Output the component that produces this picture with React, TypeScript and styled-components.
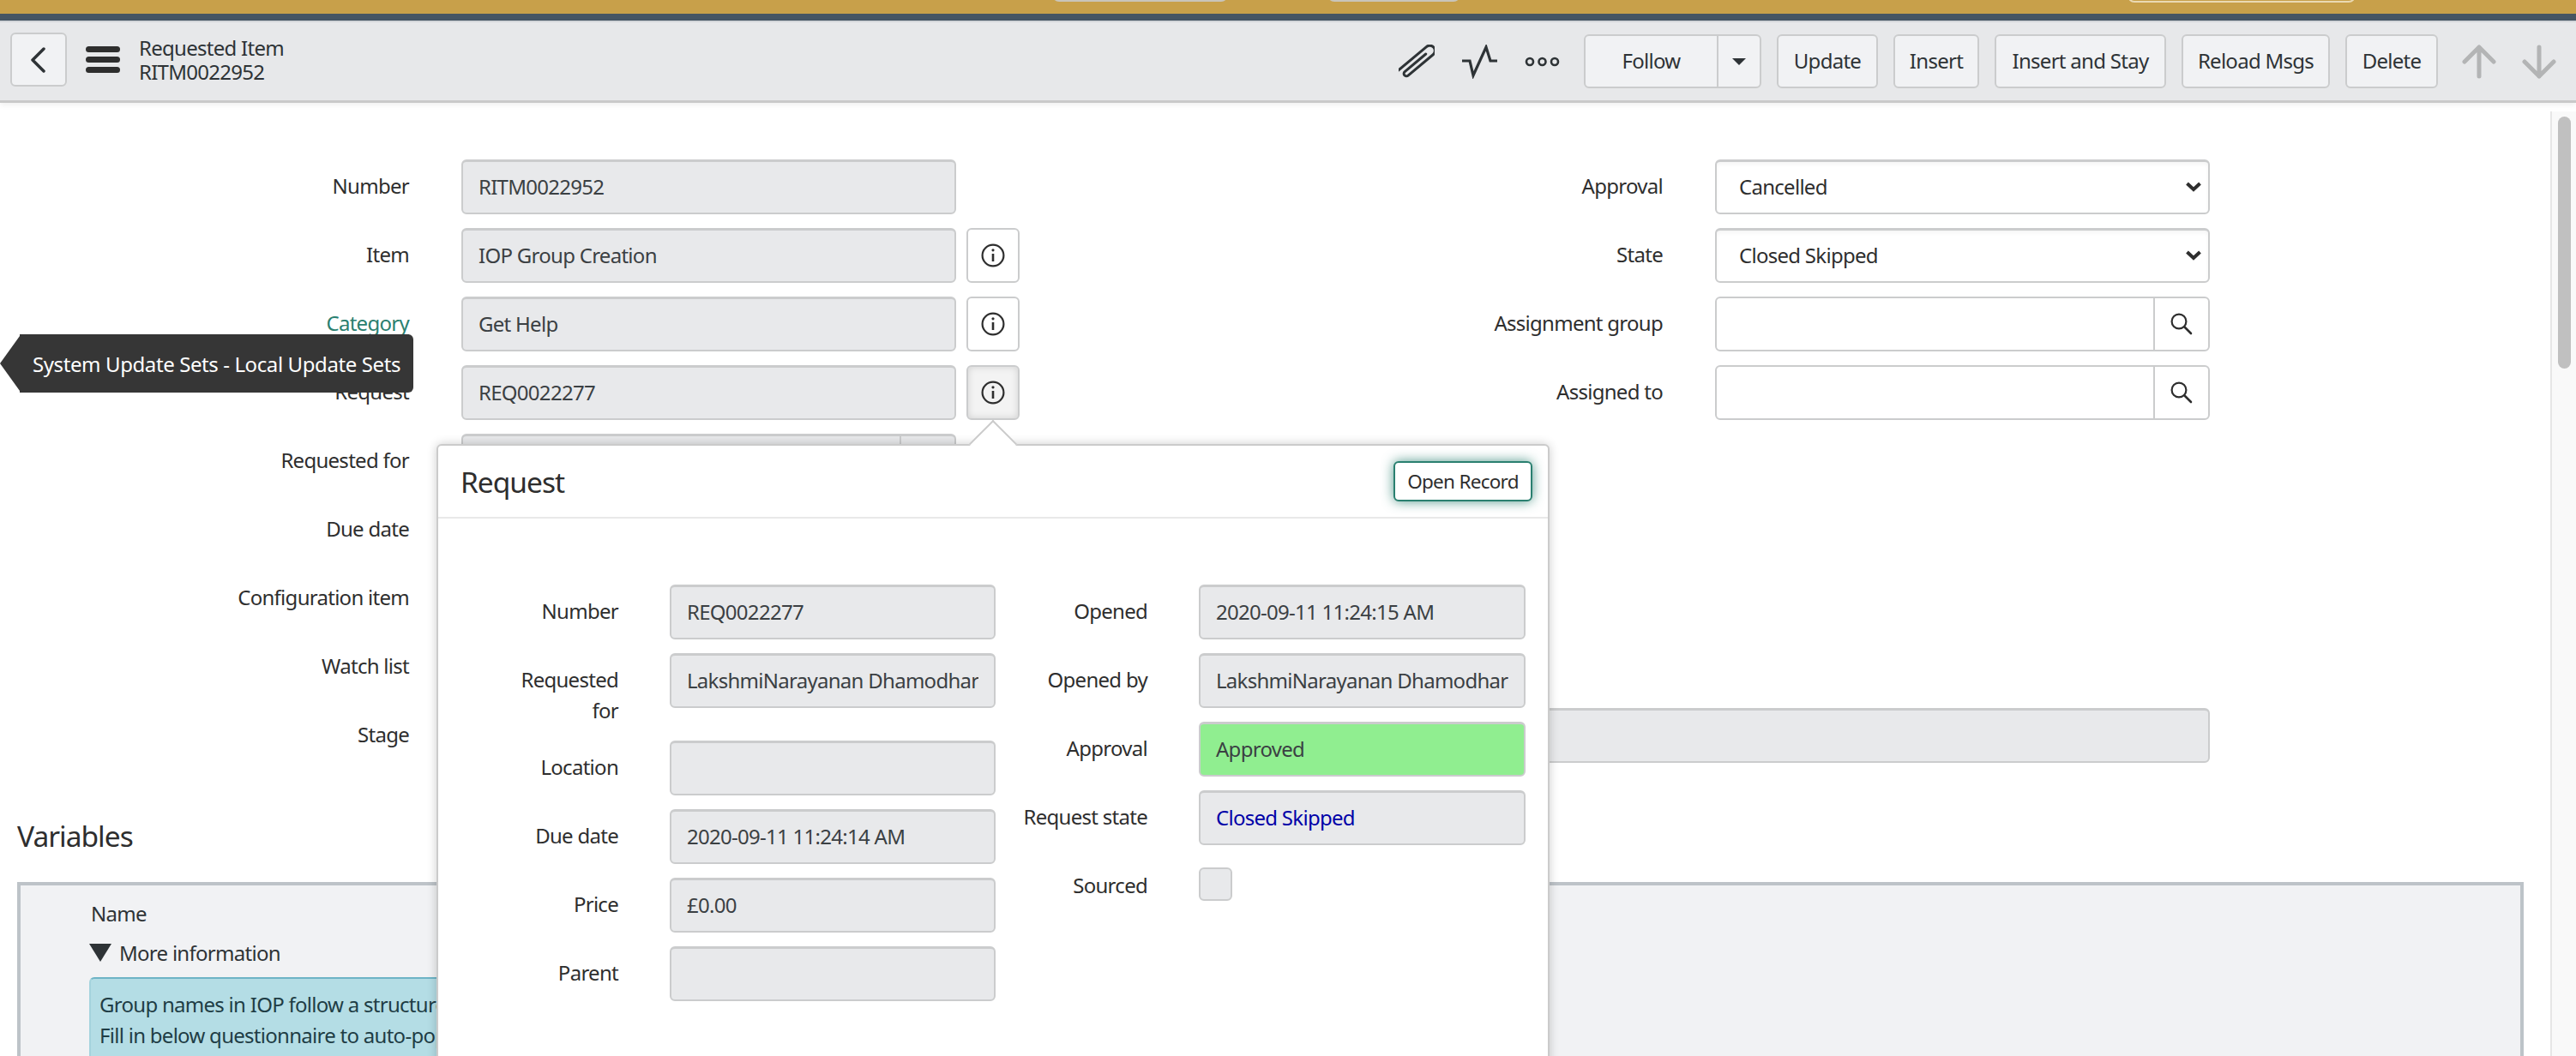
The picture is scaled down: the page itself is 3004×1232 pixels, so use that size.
import React from 'react'
import styled, { createGlobalStyle } from 'styled-components'

const GlobalStyle = createGlobalStyle`
  html, body {
    margin: 0;
    padding: 0;
    background: #fff;
  }
  body {
    font-family: 'Noto Sans', 'Open Sans', sans-serif;
    font-size: 24px;
    letter-spacing: -0.72px;
    color: #2e2e2e;
  }
  * {
    box-sizing: border-box;
  }
`

const Page = styled.div`
  position: relative;
  width: 3004px;
  height: 1232px;
  overflow: hidden;
  display: flex;
  flex-direction: column;
`

const Banner = styled.div`
  position: relative;
  height: 16px;
  flex: none;
  background: #c8a04a;
  display: flex;
  align-items: flex-start;
`

const BannerTab = styled.span<{ $left: number; $width: number; $outline?: boolean }>`
  position: absolute;
  left: ${(p) => p.$left}px;
  width: ${(p) => p.$width}px;
  top: -8px;
  height: ${(p) => (p.$outline ? 11 : 10)}px;
  border-radius: 0 0 8px 8px;
  background: ${(p) => (p.$outline ? 'transparent' : '#c9c5ba')};
  border: ${(p) => (p.$outline ? '2px solid #ead9b2' : 'none')};
`

const NavStrip = styled.div`
  height: 8px;
  flex: none;
  background: #465563;
`

const Toolbar = styled.header`
  position: relative;
  z-index: 1;
  flex: none;
  height: 96px;
  display: flex;
  align-items: center;
  padding: 0 23px 0 12px;
  background: #e7e8ea;
  border-top: 2px solid #d3d6d9;
  border-bottom: 3px solid #c9c9c9;
  box-shadow: 0 3px 6px rgba(0, 0, 0, 0.06);
`

const BackButton = styled.button`
  width: 66px;
  height: 63px;
  margin-bottom: 4px;
  padding: 0;
  display: flex;
  align-items: center;
  justify-content: center;
  background: #f1f2f4;
  border: 2px solid #cbcccd;
  border-radius: 6px;
  color: #2e3336;
`

const MenuIcon = styled.svg`
  margin-left: 22px;
  margin-bottom: 4px;
  flex: none;
`

const RecordTitle = styled.div`
  margin-left: 22px;
  margin-bottom: 4px;
  line-height: 28px;
  color: #2e3336;
`

const ToolbarActions = styled.div`
  margin-left: auto;
  display: flex;
  align-items: center;
  gap: 18px;
`

const IconGroup = styled.div`
  display: flex;
  align-items: center;
  gap: 32px;
  margin-right: 9px;
  color: #2e3336;
`

const ActionButton = styled.button<{ $width: number }>`
  width: ${(p) => p.$width}px;
  height: 63px;
  padding: 0 0 3px;
  font: inherit;
  letter-spacing: inherit;
  color: #2e3336;
  background: #f1f2f4;
  border: 2px solid #cbcccd;
  border-radius: 6px;
`

const SplitButton = styled.div`
  width: 207px;
  height: 63px;
  display: flex;
  background: #f1f2f4;
  border: 2px solid #cbcccd;
  border-radius: 6px;
  color: #2e3336;
`

const SplitLabel = styled.span`
  flex: 1;
  display: flex;
  align-items: center;
  justify-content: center;
  padding-bottom: 3px;
`

const SplitCaret = styled.span`
  width: 50px;
  display: flex;
  align-items: center;
  justify-content: center;
  border-left: 2px solid #cbcccd;
`

const ArrowGroup = styled.div`
  display: flex;
  gap: 30px;
  margin-left: 10px;
  color: #b3b4b5;
`

const Body = styled.div`
  flex: 1;
  min-height: 0;
  display: flex;
`

const Main = styled.main`
  flex: 1;
  min-width: 0;
  padding-top: 66px;
  overflow: hidden;
`

const Scrollbar = styled.div`
  flex: none;
  width: 30px;
  margin-top: 10px;
  padding: 6px 6px 0 7px;
  background: #f9f9f9;
  border-left: 2px solid #e6e6e6;
`

const ScrollThumb = styled.div`
  height: 294px;
  border-radius: 8px;
  background: #c0c0c0;
`

const FormColumns = styled.div`
  display: grid;
  grid-template-columns: 1500px 1077px;
`

const FormRow = styled.div<{ $labelWidth: number }>`
  display: grid;
  grid-template-columns: ${(p) => p.$labelWidth}px 1fr;
  column-gap: 61px;
  min-height: 64px;
  margin-bottom: 16px;
`

const Label = styled.div`
  padding-top: 13px;
  line-height: 36px;
  text-align: right;
  color: #2e2e2e;
`

const LinkLabel = styled.a`
  color: #2a8070;
  text-decoration: underline;
  text-underline-offset: 4px;
`

const ControlRow = styled.div<{ $width?: number }>`
  display: flex;
  gap: 12px;
  width: ${(p) => (p.$width ? `${p.$width}px` : 'auto')};
`

const Field = styled.div<{ $width?: number; $bg?: string; $color?: string }>`
  flex: none;
  width: ${(p) => (p.$width ? `${p.$width}px` : '100%')};
  height: 64px;
  display: flex;
  align-items: center;
  padding: 0 18px 2px;
  background: ${(p) => p.$bg || '#e8e9eb'};
  color: ${(p) => p.$color || '#3b4043'};
  border: 2px solid #cbcccd;
  border-top-width: 3px;
  border-radius: 6px;
`

const ClippedText = styled.span`
  display: block;
  width: 100%;
  overflow: hidden;
  white-space: nowrap;
`

const InfoButton = styled.button<{ $pressed?: boolean }>`
  flex: none;
  width: 62px;
  height: 64px;
  padding: 0;
  display: flex;
  align-items: center;
  justify-content: center;
  background: ${(p) => (p.$pressed ? '#f3f3f3' : '#fff')};
  border: 2px solid #cbcccd;
  border-radius: 6px;
  color: #2e2e2e;
  box-shadow: ${(p) => (p.$pressed ? 'inset 0 0 8px rgba(0, 0, 0, 0.14)' : 'none')};
`

const SelectBox = styled.div`
  width: 577px;
  height: 64px;
  display: flex;
  align-items: center;
  justify-content: space-between;
  padding: 0 8px 2px 26px;
  background: #fff;
  color: #2e2e2e;
  border: 2px solid #cbcccd;
  border-top-width: 3px;
  border-radius: 6px;
  box-shadow: inset 0 3px 4px rgba(0, 0, 0, 0.04);
`

const LookupBox = styled.div`
  width: 577px;
  height: 64px;
  display: flex;
  background: #fff;
  border: 2px solid #cbcccd;
  border-radius: 6px;
`

const LookupSpacer = styled.span`
  flex: 1;
`

const LookupButton = styled.span`
  width: 64px;
  display: flex;
  align-items: center;
  justify-content: center;
  border-left: 2px solid #cbcccd;
  color: #2e2e2e;
`

const ReadonlyLookup = styled(Field)`
  padding: 0;
  justify-content: flex-end;
`

const ReadonlyLookupButton = styled.span`
  width: 64px;
  height: 100%;
  border-left: 2px solid #cbcccd;
`

const SectionHeading = styled.h2`
  margin: 65px 0 0 20px;
  height: 40px;
  font-size: 33.5px;
  line-height: 40px;
  font-weight: 400;
  letter-spacing: -1px;
  color: #2e2e2e;
`

const VariablesPanel = styled.section`
  margin: 34px 0 0 20px;
  width: 2923px;
  height: 220px;
  padding: 18px 0 0 80px;
  background: #f1f2f4;
  border: 4px solid #bdc3c8;
  border-bottom: none;
`

const VariableHead = styled.div`
  padding-left: 2px;
  line-height: 30px;
  color: #2e3336;
`

const Disclosure = styled.div`
  margin-top: 15px;
  height: 30px;
  display: flex;
  align-items: center;
  gap: 9px;
  color: #2e3336;
`

const InfoBox = styled.div`
  margin-top: 14px;
  width: 1100px;
  height: 140px;
  padding: 12px 10px;
  background: #b4dde5;
  border-top: 2px solid #6eb4c6;
  border-left: 2px solid #a4d3dd;
  border-radius: 6px 6px 0 0;
  color: #1f3d45;
  line-height: 36px;
`

const Tooltip = styled.div`
  position: absolute;
  z-index: 3;
  left: 23px;
  top: 390px;
  height: 68px;
  width: 459px;
  display: flex;
  align-items: center;
  padding-left: 15px;
  background: #363636;
  border-radius: 0 6px 6px 0;
  color: #fff;
  letter-spacing: -0.4px;
  white-space: nowrap;

  &::before {
    content: '';
    position: absolute;
    left: -23px;
    top: 2px;
    border-style: solid;
    border-width: 32px 23px 32px 0;
    border-color: transparent #363636 transparent transparent;
  }
`

const Popover = styled.div`
  position: absolute;
  z-index: 2;
  left: 509px;
  top: 518px;
  width: 1298px;
  height: 760px;
  background: #fff;
  border: 2px solid #cbcbcb;
  border-radius: 6px;
  box-shadow: 0 0 12px rgba(0, 0, 0, 0.2);
`

const PopoverArrow = styled.span`
  position: absolute;
  left: 627px;
  top: -22px;
  width: 40px;
  height: 40px;
  background: #fff;
  border-top: 2px solid #cbcbcb;
  border-left: 2px solid #cbcbcb;
  transform: rotate(45deg);
`

const PopoverHeader = styled.div`
  position: relative;
  height: 85px;
  display: flex;
  align-items: center;
  justify-content: space-between;
  padding: 0 18px 0 26px;
  border-bottom: 2px solid #e9e9e9;
`

const PopoverTitle = styled.h3`
  margin: 0;
  font-size: 33.5px;
  font-weight: 400;
  letter-spacing: -1px;
  color: #2e2e2e;
`

const OpenRecordButton = styled.button`
  width: 162px;
  height: 47px;
  margin-top: -1px;
  padding: 0;
  font: inherit;
  font-size: 22.5px;
  letter-spacing: inherit;
  color: #2e2e2e;
  background: #fff;
  border: 2px solid #2a8070;
  border-radius: 6px;
  box-shadow: 0 0 14px rgba(42, 128, 112, 0.8);
`

const PopoverBody = styled.div`
  display: grid;
  grid-template-columns: 650px 618px;
  padding-top: 77px;
`

const PopoverLabel = styled(Label)`
  justify-self: end;
  max-width: 130px;
  padding-bottom: 1px;
`

const PopoverWideLabel = styled(Label)`
  white-space: nowrap;
`

const PopoverRow = styled.div<{ $labelWidth: number }>`
  display: grid;
  grid-template-columns: ${(p) => p.$labelWidth}px 1fr;
  column-gap: 60px;
  min-height: 64px;
  margin-bottom: 16px;
`

const Checkbox = styled.div`
  width: 39px;
  height: 39px;
  margin-top: 10px;
  background: #e8e9eb;
  border: 2px solid #cbcccd;
  border-radius: 6px;
`

const ClosedSkipped = 'Closed Skipped'
const NarayananName = 'LakshmiNarayanan Dhamodhar'

function ChevronLeft() {
  return (
    <svg width="18" height="30" viewBox="0 0 18 30" fill="none" stroke="currentColor" strokeWidth="3.5" strokeLinecap="round" strokeLinejoin="round">
      <polyline points="15,2 2,15 15,28" />
    </svg>
  )
}

function Paperclip() {
  return (
    <svg width="42" height="40" viewBox="0 0 42 40" fill="none" stroke="currentColor" strokeWidth="3" strokeLinecap="round">
      <g transform="translate(21 20) rotate(-40)">
        <path d="M-27 -6 H20 A6 6 0 0 1 20 6 H-18 A3 3 0 0 1 -18 0 H14" />
      </g>
    </svg>
  )
}

function Pulse() {
  return (
    <svg width="41" height="40" viewBox="0 0 41 40" fill="none" stroke="currentColor" strokeWidth="3.2">
      <polyline points="0,19 9,19 13,36 28,3 33,19 41,19" />
    </svg>
  )
}

function Dots() {
  return (
    <svg width="42" height="14" viewBox="0 0 42 14" fill="none" stroke="currentColor" strokeWidth="2.6">
      <circle cx="6" cy="7" r="4" />
      <circle cx="20.5" cy="7" r="4" />
      <circle cx="35" cy="7" r="4" />
    </svg>
  )
}

function Caret() {
  return (
    <svg width="16" height="8" viewBox="0 0 16 8" fill="currentColor">
      <polygon points="0,0 16,0 8,8" />
    </svg>
  )
}

function VerticalArrow({ down }: { down?: boolean }) {
  return (
    <svg width="40" height="40" viewBox="0 0 40 40" fill="none" stroke="currentColor" strokeWidth="5" strokeLinecap="round" strokeLinejoin="round">
      <g transform={down ? 'rotate(180 20 20)' : undefined}>
        <path d="M20 37 V3 M3 20 L20 3 L37 20" />
      </g>
    </svg>
  )
}

function InfoGlyph() {
  return (
    <svg width="28" height="28" viewBox="0 0 28 28" fill="none" stroke="currentColor" strokeWidth="2.2">
      <circle cx="14" cy="14" r="12.4" />
      <line x1="14" y1="12" x2="14" y2="21" strokeWidth="2.6" />
      <circle cx="14" cy="7.8" r="1.6" fill="currentColor" stroke="none" />
    </svg>
  )
}

function SearchGlyph() {
  return (
    <svg width="26" height="26" viewBox="0 0 26 26" fill="none" stroke="currentColor" strokeWidth="2.2" strokeLinecap="round">
      <circle cx="10" cy="10" r="8.4" />
      <line x1="16.5" y1="16.5" x2="24" y2="24" strokeWidth="2.6" />
    </svg>
  )
}

function SelectChevron() {
  return (
    <svg width="18" height="12" viewBox="0 0 18 12" fill="none" stroke="currentColor" strokeWidth="4">
      <polyline points="1.5,2 9,9 16.5,2" />
    </svg>
  )
}

function DisclosureTriangle() {
  return (
    <svg width="26" height="21" viewBox="0 0 26 21" fill="currentColor">
      <polygon points="0,0 26,0 13,21" />
    </svg>
  )
}

const buttons = [
  { label: 'Update', width: 118 },
  { label: 'Insert', width: 100 },
  { label: 'Insert and Stay', width: 200 },
  { label: 'Reload Msgs', width: 173 },
  { label: 'Delete', width: 108 },
]

export default function App() {
  return (
    <Page>
      <GlobalStyle />
      <Banner>
        <BannerTab $left={1227} $width={205} />
        <BannerTab $left={1548} $width={155} />
        <BannerTab $left={2481} $width={266} $outline />
      </Banner>
      <NavStrip />
      <Toolbar>
        <BackButton aria-label="Back">
          <ChevronLeft />
        </BackButton>
        <MenuIcon width="40" height="31" viewBox="0 0 40 31" fill="#2e2e2e">
          <rect width="40" height="7" y="0" rx="3.5" />
          <rect width="40" height="7" y="12" rx="3.5" />
          <rect width="40" height="7" y="24" rx="3.5" />
        </MenuIcon>
        <RecordTitle>
          <div>Requested Item</div>
          <div>RITM0022952</div>
        </RecordTitle>
        <ToolbarActions>
          <IconGroup>
            <Paperclip />
            <Pulse />
            <Dots />
          </IconGroup>
          <SplitButton>
            <SplitLabel>Follow</SplitLabel>
            <SplitCaret>
              <Caret />
            </SplitCaret>
          </SplitButton>
          {buttons.map((b) => (
            <ActionButton key={b.label} $width={b.width}>
              {b.label}
            </ActionButton>
          ))}
          <ArrowGroup>
            <VerticalArrow />
            <VerticalArrow down />
          </ArrowGroup>
        </ToolbarActions>
      </Toolbar>
      <Body>
        <Main>
          <FormColumns>
            <div>
              <FormRow $labelWidth={477}>
                <Label>Number</Label>
                <ControlRow>
                  <Field $width={577}>RITM0022952</Field>
                </ControlRow>
              </FormRow>
              <FormRow $labelWidth={477}>
                <Label>Item</Label>
                <ControlRow>
                  <Field $width={577}>IOP Group Creation</Field>
                  <InfoButton aria-label="Item details">
                    <InfoGlyph />
                  </InfoButton>
                </ControlRow>
              </FormRow>
              <FormRow $labelWidth={477}>
                <Label>
                  <LinkLabel>Category</LinkLabel>
                </Label>
                <ControlRow>
                  <Field $width={577}>Get Help</Field>
                  <InfoButton aria-label="Category details">
                    <InfoGlyph />
                  </InfoButton>
                </ControlRow>
              </FormRow>
              <FormRow $labelWidth={477}>
                <Label>Request</Label>
                <ControlRow>
                  <Field $width={577}>REQ0022277</Field>
                  <InfoButton $pressed aria-label="Request details">
                    <InfoGlyph />
                  </InfoButton>
                </ControlRow>
              </FormRow>
              <FormRow $labelWidth={477}>
                <Label>Requested for</Label>
                <ControlRow $width={577}>
                  <ReadonlyLookup>
                    <ReadonlyLookupButton />
                  </ReadonlyLookup>
                </ControlRow>
              </FormRow>
              <FormRow $labelWidth={477}>
                <Label>Due date</Label>
                <div />
              </FormRow>
              <FormRow $labelWidth={477}>
                <Label>Configuration item</Label>
                <div />
              </FormRow>
              <FormRow $labelWidth={477}>
                <Label>Watch list</Label>
                <div />
              </FormRow>
            </div>
            <div>
              <FormRow $labelWidth={439}>
                <Label>Approval</Label>
                <SelectBox>
                  Cancelled
                  <SelectChevron />
                </SelectBox>
              </FormRow>
              <FormRow $labelWidth={439}>
                <Label>State</Label>
                <SelectBox>
                  {ClosedSkipped}
                  <SelectChevron />
                </SelectBox>
              </FormRow>
              <FormRow $labelWidth={439}>
                <Label>Assignment group</Label>
                <LookupBox>
                  <LookupSpacer />
                  <LookupButton>
                    <SearchGlyph />
                  </LookupButton>
                </LookupBox>
              </FormRow>
              <FormRow $labelWidth={439}>
                <Label>Assigned to</Label>
                <LookupBox>
                  <LookupSpacer />
                  <LookupButton>
                    <SearchGlyph />
                  </LookupButton>
                </LookupBox>
              </FormRow>
            </div>
          </FormColumns>
          <FormRow $labelWidth={477}>
            <Label>Stage</Label>
            <Field $width={2039} />
          </FormRow>
          <SectionHeading>Variables</SectionHeading>
          <VariablesPanel>
            <VariableHead>Name</VariableHead>
            <Disclosure>
              <DisclosureTriangle />
              More information
            </Disclosure>
            <InfoBox>
              <div>Group names in IOP follow a structured naming convention.</div>
              <div>Fill in below questionnaire to auto-populate the group name.</div>
            </InfoBox>
          </VariablesPanel>
        </Main>
        <Scrollbar>
          <ScrollThumb />
        </Scrollbar>
      </Body>
      <Tooltip>System Update Sets - Local Update Sets</Tooltip>
      <Popover>
        <PopoverArrow />
        <PopoverHeader>
          <PopoverTitle>Request</PopoverTitle>
          <OpenRecordButton>Open Record</OpenRecordButton>
        </PopoverHeader>
        <PopoverBody>
          <div>
            <PopoverRow $labelWidth={210}>
              <PopoverLabel>Number</PopoverLabel>
              <Field $width={380}>REQ0022277</Field>
            </PopoverRow>
            <PopoverRow $labelWidth={210}>
              <PopoverLabel>Requested for</PopoverLabel>
              <Field $width={380}>
                <ClippedText>{NarayananName}</ClippedText>
              </Field>
            </PopoverRow>
            <PopoverRow $labelWidth={210}>
              <PopoverLabel>Location</PopoverLabel>
              <Field $width={380} />
            </PopoverRow>
            <PopoverRow $labelWidth={210}>
              <PopoverLabel>Due date</PopoverLabel>
              <Field $width={380}>2020-09-11 11:24:14 AM</Field>
            </PopoverRow>
            <PopoverRow $labelWidth={210}>
              <PopoverLabel>Price</PopoverLabel>
              <Field $width={380}>£0.00</Field>
            </PopoverRow>
            <PopoverRow $labelWidth={210}>
              <PopoverLabel>Parent</PopoverLabel>
              <Field $width={380} />
            </PopoverRow>
          </div>
          <div>
            <PopoverRow $labelWidth={177}>
              <PopoverWideLabel>Opened</PopoverWideLabel>
              <Field $width={381}>2020-09-11 11:24:15 AM</Field>
            </PopoverRow>
            <PopoverRow $labelWidth={177}>
              <PopoverWideLabel>Opened by</PopoverWideLabel>
              <Field $width={381}>
                <ClippedText>{NarayananName}</ClippedText>
              </Field>
            </PopoverRow>
            <PopoverRow $labelWidth={177}>
              <PopoverWideLabel>Approval</PopoverWideLabel>
              <Field $width={381} $bg="#90ee90">
                Approved
              </Field>
            </PopoverRow>
            <PopoverRow $labelWidth={177}>
              <PopoverWideLabel>Request state</PopoverWideLabel>
              <Field $width={381} $color="#0000a8">
                {ClosedSkipped}
              </Field>
            </PopoverRow>
            <PopoverRow $labelWidth={177}>
              <PopoverWideLabel>Sourced</PopoverWideLabel>
              <Checkbox />
            </PopoverRow>
          </div>
        </PopoverBody>
      </Popover>
    </Page>
  )
}
